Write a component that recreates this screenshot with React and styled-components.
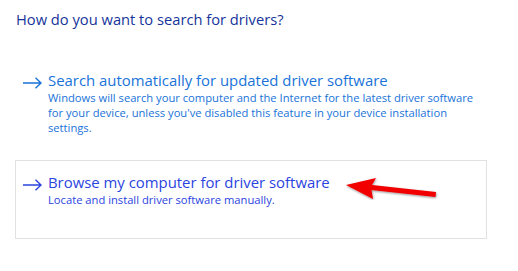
import React from 'react';
import styled, { createGlobalStyle } from 'styled-components';

const GlobalStyle = createGlobalStyle`
    body {
        margin: 0;
        background: #fff;
        font-family: 'Open Sans', 'Noto Sans', sans-serif;
    }
`;

const options = [
    {
        title: 'Search automatically for updated driver software',
        desc: "Windows will search your computer and the Internet for the latest driver software for your device, unless you've disabled this feature in your device installation settings.",
    },
    {
        title: 'Browse my computer for driver software',
        desc: 'Locate and install driver software manually.',
        active: true,
    },
];

const ArrowIcon = ({ color }) => (
    <svg width="19" height="12" viewBox="0 0 19 12" fill="none">
        <path d="M0 6H18M12.5 0.8L18 6L12.5 11.2" stroke={color} strokeWidth="1.4" />
    </svg>
);

const RedArrow = () => (
    <Pointer width="100" height="30" viewBox="0 0 100 30">
        <defs>
            <filter id="sh" x="-10%" y="-30%" width="120%" height="160%">
                <feDropShadow dx="0.5" dy="1" stdDeviation="0.8" floodColor="#000" floodOpacity="0.45" />
            </filter>
        </defs>
        <g filter="url(#sh)" fill="#f20000">
            <polygon points="4,15 34,8 30,15 94,22 93.5,27 29.5,20 31,29" />
        </g>
    </Pointer>
);

const App = () => {
    return (
        <Page>
            <GlobalStyle />
            <Heading>How do you want to search for drivers?</Heading>
            <List>
                {options.map((o) => (
                    <Option key={o.title} $active={o.active}>
                        <ArrowSlot>
                            <ArrowIcon color={o.active ? '#2a44e0' : '#1873d9'} />
                        </ArrowSlot>
                        <Body>
                            <Title $active={o.active}>{o.title}</Title>
                            <Desc $active={o.active}>{o.desc}</Desc>
                        </Body>
                        {o.active && <RedArrow />}
                    </Option>
                ))}
            </List>
        </Page>
    );
};

const Page = styled.div`
    width: 518px;
    height: 271px;
    padding: 9px 31px 0 15px;
    box-sizing: border-box;
    overflow: hidden;
`;

const Heading = styled.h1`
    margin: 0 0 0 1px;
    font-size: 14.7px;
    font-weight: 400;
    line-height: 20px;
    color: #15359a;
`;

const List = styled.div`
    display: flex;
    flex-direction: column;
    gap: 23px;
    margin-top: 29px;
`;

const Option = styled.div`
    position: relative;
    display: flex;
    align-items: flex-start;
    min-height: 79px;
    box-sizing: border-box;
    padding: 11px 8px 0 7px;
    border: 1px solid ${(p) => (p.$active ? '#e1e1e1' : 'transparent')};
`;

const ArrowSlot = styled.div`
    width: 19px;
    margin-right: 6px;
    padding-top: 2px;
    flex-shrink: 0;
`;

const Body = styled.div`
    display: flex;
    flex-direction: column;
`;

const Title = styled.div`
    font-size: 14.9px;
    line-height: 20px;
    color: ${(p) => (p.$active ? '#2a44e0' : '#1873d9')};
`;

const Desc = styled.div`
    font-size: 11.2px;
    line-height: 15px;
    color: ${(p) => (p.$active ? '#2a44e0' : '#1873d9')};
`;

const Pointer = styled.svg`
    position: absolute;
    left: 326px;
    top: 9px;
`;

export default App;
